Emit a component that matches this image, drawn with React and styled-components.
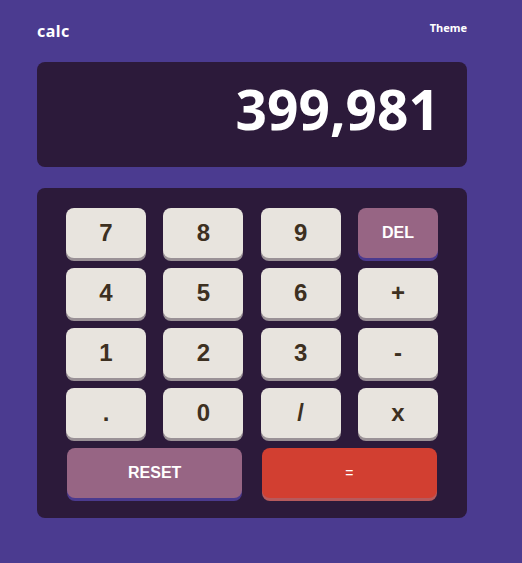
import React from "react";
import styled, { createGlobalStyle } from "styled-components";

const GlobalStyle = createGlobalStyle`
    body {
        margin: 0;
        background: #4b3b90;
        font-family: "Liberation Sans", Arial, sans-serif;
    }
`;

const keys = [
    { label: "7" },
    { label: "8" },
    { label: "9" },
    { label: "DEL", kind: "accent" },
    { label: "4" },
    { label: "5" },
    { label: "6" },
    { label: "+" },
    { label: "1" },
    { label: "2" },
    { label: "3" },
    { label: "-" },
    { label: "." },
    { label: "0" },
    { label: "/" },
    { label: "x" },
    { label: "RESET", kind: "accent", wide: true },
    { label: "=", kind: "equals", wide: true }
];

const App = () => {
    return (
        <>
            <GlobalStyle />
            <Page>
                <Header>
                    <Logo>calc</Logo>
                    <ThemeLabel>Theme</ThemeLabel>
                </Header>
                <Display>399,981</Display>
                <Keypad>
                    {keys.map(key => (
                        <Key key={key.label} $kind={key.kind} $wide={key.wide}>
                            {key.label}
                        </Key>
                    ))}
                </Keypad>
            </Page>
        </>
    );
};

const Page = styled.div`
    width: 430px;
    padding: 20px 0 0 37px;
`;

const Header = styled.div`
    display: flex;
    justify-content: space-between;
    align-items: flex-start;
    height: 42px;
    color: #ffffff;
    font-family: "Noto Sans", sans-serif;
    font-weight: 700;
`;

const Logo = styled.div`
    font-size: 16px;
    line-height: 22px;
    letter-spacing: 0.5px;
`;

const ThemeLabel = styled.div`
    font-size: 11px;
    line-height: 16px;
`;

const Display = styled.div`
    height: 105px;
    box-sizing: border-box;
    background: #2c1a3a;
    border-radius: 8px;
    padding: 12px 27px 0 0;
    text-align: right;
    color: #ffffff;
    font-family: "Noto Sans", sans-serif;
    font-weight: 700;
    font-size: 55px;
    line-height: 69px;
`;

const Keypad = styled.div`
    margin-top: 21px;
    background: #2c1a3a;
    border-radius: 8px;
    padding: 20px 29px 20px;
    display: grid;
    grid-template-columns: repeat(4, 80px);
    column-gap: 17.33px;
    row-gap: 10px;
`;

const palette = {
    accent: { bg: "#976584", shadow: "#4b3a8e", color: "#ffffff", size: "16px" },
    equals: { bg: "#d23f31", shadow: "#b75a5c", color: "#ffffff", size: "14px" },
    normal: { bg: "#e8e4de", shadow: "#9a9196", color: "#3d3021", size: "24px" }
};

const Key = styled.button`
    height: 50px;
    border: none;
    border-radius: 8px;
    font-family: "Liberation Sans", Arial, sans-serif;
    font-weight: ${({ $kind }) => ($kind === "equals" ? 400 : 700)};
    font-size: ${({ $kind }) => palette[$kind || "normal"].size};
    background: ${({ $kind }) => palette[$kind || "normal"].bg};
    color: ${({ $kind }) => palette[$kind || "normal"].color};
    box-shadow: 0 3px 0 ${({ $kind }) => palette[$kind || "normal"].shadow};
    cursor: pointer;
    ${({ $wide }) => $wide && `grid-column: span 2; margin: 0 1px;`}
`;

export default App;
